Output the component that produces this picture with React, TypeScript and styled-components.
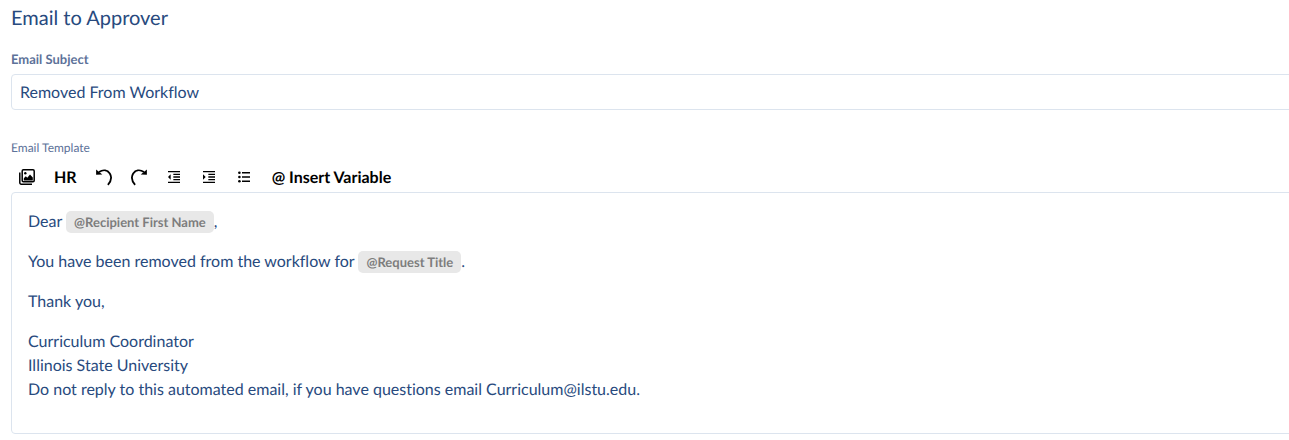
import React from "react";
import styled, { createGlobalStyle } from "styled-components";
import { MdFormatIndentDecrease, MdFormatIndentIncrease } from "react-icons/md";

const GlobalStyle = createGlobalStyle`
  * { box-sizing: border-box; }
  body {
    margin: 0;
    background: #fff;
    color: #284a7e;
    font-family: Lato, sans-serif;
    font-size: 16px;
    line-height: 24px;
    text-rendering: geometricPrecision;
    font-variant-ligatures: none;
    overflow-x: hidden;
  }
`;

const Section = styled.section`
  padding: 6px 0 6px 11px;
`;

const Title = styled.h2`
  margin: 0 0 17px;
  font-size: 20px;
  line-height: 24px;
  font-weight: 400;
`;

const Label = styled.label<{ $strong?: boolean }>`
  display: block;
  color: #5d7299;
  font-size: ${(p) => (p.$strong ? 13 : 12)}px;
  font-weight: ${(p) => (p.$strong ? 700 : 400)};
  line-height: 24px;
`;

const SubjectInput = styled.input`
  display: block;
  width: calc(100% + 8px);
  height: 36px;
  margin: 3px 0 26px;
  padding: 0 8px;
  border: 1px solid #dce4ee;
  border-radius: 4px;
  background: #fff;
  color: inherit;
  font: inherit;
  text-rendering: inherit;
`;

const Toolbar = styled.div`
  display: flex;
  align-items: center;
  height: 32px;
  padding-top: 2px;
`;

const ToolButton = styled.button<{ $kind?: "text" | "compact" }>`
  display: flex;
  align-items: center;
  justify-content: ${(p) => (p.$kind === "compact" ? "flex-start" : "center")};
  flex: none;
  min-width: ${(p) => (p.$kind === "compact" ? 33 : 35)}px;
  height: 30px;
  padding: ${(p) => (p.$kind === "text" ? "1px 10px 0" : "0 8px")};
  border: 0;
  background: none;
  color: #000;
  font: inherit;
  font-weight: 700;
  text-rendering: inherit;
  cursor: pointer;
`;

const Editor = styled.div`
  width: calc(100% + 8px);
  min-height: 242px;
  padding: 17px 16px 14px;
  border: 1px solid #dce4ee;
  border-radius: 4px;
  outline: none;
`;

const Paragraph = styled.p`
  margin: 0 0 16px;
`;

const Variable = styled.span`
  display: inline-block;
  height: 22px;
  padding: 0 8px;
  border-radius: 5px;
  background: #e8e8e8;
  color: #7d7d7d;
  font-size: 13px;
  font-weight: 700;
  line-height: 22px;
`;

const GalleryIcon = () => (
  <svg width="16" height="16" viewBox="0 0 16 16" fill="none" stroke="currentColor" aria-hidden="true">
    <rect x="3.2" y="0.8" width="12" height="12" rx="1.2" strokeWidth="1.5" />
    <path d="M0.8 3.4V13.8a1.4 1.4 0 0 0 1.4 1.4H13" strokeWidth="1.5" />
    <path d="M4.8 11.4V9.2l2-2 1.5 1.5 2.7-3.2 2.8 3.1v2.8z" fill="currentColor" stroke="none" />
    <circle cx="6.3" cy="4.2" r="1.2" fill="currentColor" stroke="none" />
  </svg>
);

const TurnArrow = ({ flip }: { flip?: boolean }) => (
  <svg width="18" height="18" viewBox="0 0 18 18" fill="none" aria-hidden="true">
    <g transform={flip ? "translate(18 0) scale(-1 1)" : undefined}>
      <path d="M4 3.9C8.3 1.3 12.5 2.1 14.8 5.4c2 3.2 1.6 7.4-1.9 11.4" stroke="currentColor" strokeWidth="1.8" />
      <path d="M1.1 1.4v5.4l6.2-.4z" fill="currentColor" />
    </g>
  </svg>
);

const BulletsIcon = () => (
  <svg width="12" height="12" viewBox="0 0 12 12" fill="currentColor" aria-hidden="true">
    <path d="M4 1h8v1.6H4zM4 5.2h8v1.6H4zM4 9.4h8V11H4z" />
    <circle cx="1.4" cy="1.8" r="1.3" />
    <circle cx="1.4" cy="6" r="1.3" />
    <circle cx="1.4" cy="10.2" r="1.3" />
  </svg>
);

export default function App() {
  return (
    <>
      <GlobalStyle />
      <Section>
        <Title>Email to Approver</Title>
        <Label htmlFor="subject" $strong>Email Subject</Label>
        <SubjectInput id="subject" type="text" defaultValue="Removed From Workflow" />
        <Label as="div" id="template-label">Email Template</Label>
        <Toolbar role="toolbar" aria-label="Formatting">
          <ToolButton type="button" aria-label="Insert image" $kind="compact"><GalleryIcon /></ToolButton>
          <ToolButton type="button" $kind="text">HR</ToolButton>
          <ToolButton type="button" aria-label="Undo"><TurnArrow /></ToolButton>
          <ToolButton type="button" aria-label="Redo"><TurnArrow flip /></ToolButton>
          <ToolButton type="button" aria-label="Decrease indent"><MdFormatIndentDecrease size={16} /></ToolButton>
          <ToolButton type="button" aria-label="Increase indent"><MdFormatIndentIncrease size={16} /></ToolButton>
          <ToolButton type="button" aria-label="Bulleted list"><BulletsIcon /></ToolButton>
          <ToolButton type="button" $kind="text">@ Insert Variable</ToolButton>
        </Toolbar>
        <Editor role="textbox" aria-multiline="true" aria-labelledby="template-label" contentEditable suppressContentEditableWarning spellCheck={false}>
          <Paragraph>Dear <Variable contentEditable={false}>@Recipient First Name</Variable>,</Paragraph>
          <Paragraph>You have been removed from the workflow for <Variable contentEditable={false}>@Request Title</Variable>.</Paragraph>
          <Paragraph>Thank you,</Paragraph>
          <Paragraph>
            Curriculum Coordinator<br />
            Illinois State University<br />
            Do not reply to this automated email, if you have questions email Curriculum@ilstu.edu.
          </Paragraph>
        </Editor>
      </Section>
    </>
  );
}
